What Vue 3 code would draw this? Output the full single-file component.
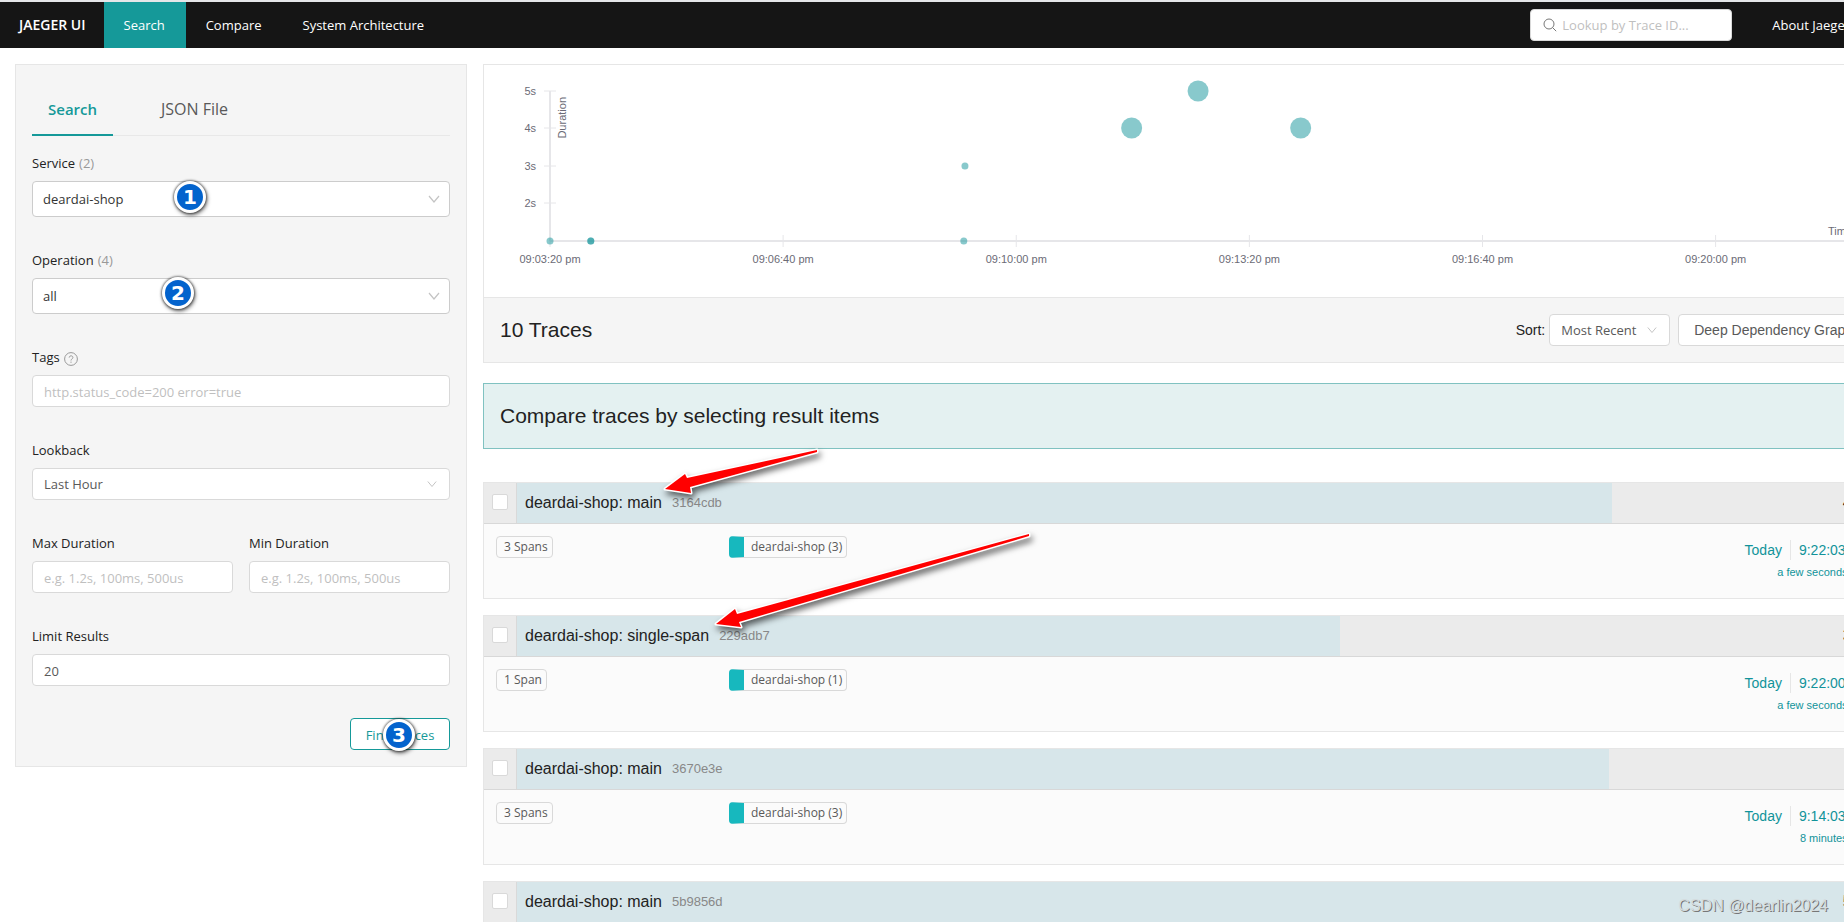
<template>
  <div class="app">
    <div class="page">
      <nav class="nav">
        <a href="#" class="nav__brand">JAEGER UI</a>
        <a
          v-for="item in navItems"
          :key="item"
          href="#"
          class="nav__item"
          :class="{ 'nav__item--active': item === 'Search' }"
        >{{ item }}</a>
        <label class="lookup">
          <svg class="lookup__icon" viewBox="0 0 14 14" aria-hidden="true">
            <circle cx="6" cy="6" r="5" />
            <path d="M9.6 9.6L13.2 13.2" />
          </svg>
          <input v-model="traceId" class="lookup__input" aria-label="Lookup by Trace ID" placeholder="Lookup by Trace ID..." />
        </label>
        <a href="#" class="nav__item nav__item--about">About Jaeger
          <svg class="chevron chevron--nav" viewBox="0 0 12 8" aria-hidden="true"><path d="M1 1l5 6 5-6" /></svg>
        </a>
      </nav>

      <div class="layout">
        <aside class="layout__side">
          <form class="panel search-form" @submit.prevent>
            <div class="tabs">
              <button
                v-for="tab in tabs"
                :key="tab"
                type="button"
                class="tabs__tab"
                :class="{ 'tabs__tab--active': tab === activeTab }"
                @click="activeTab = tab"
              >{{ tab }}</button>
            </div>

            <div class="field">
              <label class="field__label" for="service">Service <span class="field__count">(2)</span></label>
              <div class="select">
                <select id="service" v-model="service" class="control control--tall">
                  <option>deardai-shop</option>
                </select>
                <svg class="chevron" viewBox="0 0 12 8" aria-hidden="true"><path d="M1 1l5 6 5-6" /></svg>
                <span class="badge badge--service">1</span>
              </div>
            </div>

            <div class="field">
              <label class="field__label" for="operation">Operation <span class="field__count">(4)</span></label>
              <div class="select">
                <select id="operation" v-model="operation" class="control control--tall">
                  <option>all</option>
                </select>
                <svg class="chevron" viewBox="0 0 12 8" aria-hidden="true"><path d="M1 1l5 6 5-6" /></svg>
                <span class="badge badge--operation">2</span>
              </div>
            </div>

            <div class="field">
              <label class="field__label" for="tags">Tags
                <svg class="help" viewBox="0 0 14 14" aria-hidden="true">
                  <circle cx="7" cy="7" r="6.4" />
                  <path d="M5.2 5.6C5.2 3.2 8.9 3.3 8.9 5.5C8.9 7 7 6.9 7 8.5M7 9.6V10.8" />
                </svg>
              </label>
              <input id="tags" v-model="tags" class="control" placeholder="http.status_code=200 error=true" />
            </div>

            <div class="field">
              <label class="field__label" for="lookback">Lookback</label>
              <div class="select">
                <select id="lookback" v-model="lookback" class="control">
                  <option>Last Hour</option>
                </select>
                <svg class="chevron chevron--small" viewBox="0 0 12 8" aria-hidden="true"><path d="M1 1l5 6 5-6" /></svg>
              </div>
            </div>

            <div class="field-row">
              <div class="field">
                <label class="field__label" for="max">Max Duration</label>
                <input id="max" v-model="maxDuration" class="control" placeholder="e.g. 1.2s, 100ms, 500us" />
              </div>
              <div class="field">
                <label class="field__label" for="min">Min Duration</label>
                <input id="min" v-model="minDuration" class="control" placeholder="e.g. 1.2s, 100ms, 500us" />
              </div>
            </div>

            <div class="field field--last">
              <label class="field__label" for="limit">Limit Results</label>
              <input id="limit" v-model="limit" class="control" />
            </div>

            <div class="search-form__footer">
              <button type="submit" class="find">Find Traces</button>
              <span class="badge badge--find">3</span>
            </div>
          </form>
        </aside>

        <main class="layout__main">
          <section class="panel results">
            <div class="chart">
              <svg class="chart__plot">
                <line class="chart__axis" x1="0" y1="26" x2="0" y2="176" />
                <line class="chart__axis" x1="0" y1="176" x2="100%" y2="176" />
                <g v-for="tick in yTicks" :key="tick.label">
                  <line class="chart__tick" x1="-6" :y1="tick.y" x2="6" :y2="tick.y" />
                  <text class="chart__label" x="-14" :y="tick.y + 4" text-anchor="end">{{ tick.label }}</text>
                </g>
                <g v-for="tick in xTicks" :key="tick.label">
                  <line class="chart__tick" :x1="toX(tick.t)" y1="170" :x2="toX(tick.t)" y2="182" />
                  <text class="chart__label" :x="toX(tick.t)" y="198" text-anchor="middle">{{ tick.label }}</text>
                </g>
                <text class="chart__label" transform="translate(16 32) rotate(-90)" text-anchor="end">Duration</text>
                <text class="chart__label" x="100%" y="170" text-anchor="end">Time</text>
                <circle
                  v-for="(point, i) in points"
                  :key="i"
                  class="chart__point"
                  :cx="toX(point.t)"
                  :cy="point.y"
                  :r="point.r"
                />
              </svg>
            </div>
            <header class="results__header">
              <h2 class="results__title">10 Traces</h2>
              <label class="results__sort-label" for="sort">Sort:</label>
              <div class="select select--sort">
                <select id="sort" v-model="sort" class="control">
                  <option>Most Recent</option>
                </select>
                <svg class="chevron chevron--small" viewBox="0 0 12 8" aria-hidden="true"><path d="M1 1l5 6 5-6" /></svg>
              </div>
              <button type="button" class="ddg">Deep Dependency Graph</button>
            </header>
          </section>

          <section class="compare">
            <h2 class="compare__title">Compare traces by selecting result items</h2>
          </section>

          <ul class="traces">
            <li v-for="trace in traces" :key="trace.id" class="trace">
              <div class="trace__header">
                <label class="trace__check">
                  <input v-model="trace.selected" type="checkbox" class="checkbox" :aria-label="`Select ${trace.id}`" />
                </label>
                <a href="#" class="trace__title">
                  <span class="trace__bar" :style="{ width: `${trace.percent}%` }"></span>
                  <span class="trace__name">{{ trace.name }}</span>
                  <small class="trace__id">{{ trace.id }}</small>
                  <span class="trace__duration">{{ trace.duration }}</span>
                </a>
              </div>
              <div class="trace__body">
                <div class="trace__spans"><span class="tag">{{ trace.spans }}</span></div>
                <div class="trace__services"><span class="tag tag--service">{{ trace.service }}</span></div>
                <div class="trace__when">
                  <div class="trace__time">
                    <span class="trace__day">Today</span>
                    <span>{{ trace.time }}</span>
                  </div>
                  <small class="trace__ago">{{ trace.ago }}</small>
                </div>
              </div>
            </li>
          </ul>
        </main>
      </div>
    </div>

    <svg class="arrows" width="1100" height="660" aria-hidden="true">
      <path d="M665 489L685 474L687 478L817 450L817 452L690 487L691 493Z" />
      <path d="M716 624L735 609L737 614L1029 534L1029 536L739 622L741 627Z" />
    </svg>
    <span class="watermark">CSDN @dearlin2024</span>
  </div>
</template>

<script setup>
import { ref } from "vue";

const navItems = ["Search", "Compare", "System Architecture"];
const tabs = ["Search", "JSON File"];
const activeTab = ref("Search");

const traceId = ref("");
const service = ref("deardai-shop");
const operation = ref("all");
const tags = ref("");
const lookback = ref("Last Hour");
const maxDuration = ref("");
const minDuration = ref("");
const limit = ref("20");
const sort = ref("Most Recent");

// seconds covered by the x axis
const xDomain = 1117;
const toX = (seconds) => `${(seconds / xDomain) * 100}%`;

const yTicks = [
  { label: "5s", y: 26 },
  { label: "4s", y: 63 },
  { label: "3s", y: 101 },
  { label: "2s", y: 138 },
];

const xTicks = [
  { label: "09:03:20 pm", t: 0 },
  { label: "09:06:40 pm", t: 200 },
  { label: "09:10:00 pm", t: 400 },
  { label: "09:13:20 pm", t: 600 },
  { label: "09:16:40 pm", t: 800 },
  { label: "09:20:00 pm", t: 1000 },
];

const points = [
  { t: 0, y: 176, r: 3.5 },
  { t: 35, y: 176, r: 3.5 },
  { t: 35, y: 176, r: 3.5 },
  { t: 355, y: 176, r: 3.5 },
  { t: 356, y: 101, r: 3.5 },
  { t: 499, y: 63, r: 10.5 },
  { t: 556, y: 26, r: 10.5 },
  { t: 644, y: 63, r: 10.5 },
];

const traces = ref([
  {
    id: "3164cdb",
    name: "deardai-shop: main",
    percent: 80,
    duration: "4.01s",
    spans: "3 Spans",
    service: "deardai-shop (3)",
    time: "9:22:03 pm",
    ago: "a few seconds ago",
    selected: false,
  },
  {
    id: "229adb7",
    name: "deardai-shop: single-span",
    percent: 60.1,
    duration: "3.01s",
    spans: "1 Span",
    service: "deardai-shop (1)",
    time: "9:22:00 pm",
    ago: "a few seconds ago",
    selected: false,
  },
  {
    id: "3670e3e",
    name: "deardai-shop: main",
    percent: 79.8,
    duration: "4s",
    spans: "3 Spans",
    service: "deardai-shop (3)",
    time: "9:14:03 pm",
    ago: "8 minutes ago",
    selected: false,
  },
  {
    id: "5b9856d",
    name: "deardai-shop: main",
    percent: 100,
    duration: "5.01s",
    spans: "3 Spans",
    service: "deardai-shop (3)",
    time: "9:12:36 pm",
    ago: "10 minutes ago",
    selected: false,
  },
]);
</script>

<style>
body {
  margin: 0;
  background: #ffffff;
}
</style>

<style scoped>
* {
  box-sizing: border-box;
}

.app {
  position: relative;
  height: 100vh;
  overflow: hidden;
  font-family: "Open Sans", "Noto Sans", sans-serif;
  font-size: 13px;
  line-height: 20px;
  color: #222222;
}

/* the page is a little wider than the window and runs off its right edge */
.page {
  width: calc(100% + 59px);
  border-top: 2px solid #e4e6e8;
}

a {
  color: inherit;
  text-decoration: none;
}

button,
input,
select {
  font: inherit;
}

.nav {
  display: flex;
  align-items: center;
  height: 46px;
  background: #151515;
  color: #ffffff;
}

.nav__brand {
  padding: 0 18px 0 19px;
  font-size: 14px;
  font-weight: 600;
}

.nav__item {
  display: flex;
  align-items: center;
  gap: 8px;
  height: 100%;
  padding: 0 21px 0 20px;
}

.nav__item--active {
  background: #159999;
}

.nav__item--about {
  padding-right: 33px;
}

.lookup {
  display: flex;
  align-items: center;
  gap: 5px;
  width: 202px;
  height: 32px;
  margin-left: auto;
  margin-right: 20px;
  padding: 0 12px;
  background: #ffffff;
  border: 1px solid #d9d9d9;
  border-radius: 4px;
}

.lookup__icon {
  flex: none;
  width: 14px;
  height: 14px;
  fill: none;
  stroke: #777777;
}

.lookup__input {
  width: 100%;
  min-width: 0;
  padding: 0;
  border: 0;
  outline: 0;
  background: none;
}

::placeholder {
  color: #bfbfbf;
  opacity: 1;
}

.layout {
  display: flex;
  gap: 16px;
  padding: 16px 16px 0 15px;
}

.layout__side {
  flex: 0 0 452px;
}

.layout__main {
  flex: 1;
  min-width: 0;
  font-family: "Liberation Sans", Arial, sans-serif;
}

.panel {
  border: 1px solid #e6e6e6;
}

.search-form {
  padding: 16px;
  background: #f5f5f5;
}

.tabs {
  display: flex;
  gap: 32px;
  margin-bottom: 17px;
  border-bottom: 1px solid #e8e8e8;
}

.tabs__tab {
  height: 55px;
  margin-bottom: -1px;
  padding: 2px 16px 0;
  border: 0;
  border-bottom: 2px solid transparent;
  background: none;
  font-size: 16px;
  color: #595959;
}

.tabs__tab--active {
  border-bottom-color: #159999;
  color: #159999;
  font-size: 15px;
  font-weight: 600;
}

.field {
  display: flex;
  flex-direction: column;
  gap: 8px;
  margin-bottom: 33px;
}

.field--last {
  margin-bottom: 32px;
}

.field-row {
  display: grid;
  grid-template-columns: 1fr 1fr;
  gap: 16px;
}

.field__label {
  display: flex;
  align-items: center;
  gap: 4px;
}

.field__count {
  color: #999999;
}

.help {
  width: 14px;
  height: 14px;
  margin-top: 4px;
  fill: none;
  stroke: #999999;
}

.control {
  width: 100%;
  height: 32px;
  padding: 1px 11px 0;
  border: 1px solid #d9d9d9;
  border-radius: 4px;
  outline: 0;
  background: #ffffff;
  color: #595959;
  appearance: none;
}

.select .control {
  padding-top: 0;
}

.control--tall {
  height: 36px;
  padding: 0 10px;
  border-color: #cccccc;
  color: #333333;
}

.select {
  position: relative;
  display: flex;
}

.chevron {
  position: absolute;
  top: 50%;
  right: 10px;
  width: 12px;
  height: 8px;
  margin-top: -4px;
  fill: none;
  stroke: #c4c4c4;
  stroke-width: 1.2;
  pointer-events: none;
}

.chevron--small {
  right: 13px;
  width: 10px;
}

.chevron--nav {
  position: static;
  margin: 0;
  stroke: #ffffff;
}

.badge {
  position: absolute;
  display: flex;
  align-items: center;
  justify-content: center;
  width: 32px;
  height: 32px;
  border: 3px solid #ffffff;
  border-radius: 50%;
  background: #0363cd;
  box-shadow: 0 0 2px 1px rgba(0, 0, 0, 0.4), 1px 2px 4px rgba(0, 0, 0, 0.6);
  color: #ffffff;
  font-family: "DejaVu Sans", sans-serif;
  font-size: 20px;
  font-weight: 700;
}

.badge--service {
  top: 0;
  left: 142px;
}

.badge--operation {
  top: -1px;
  left: 130px;
}

.badge--find {
  top: 1px;
  right: 35px;
}

.search-form__footer {
  position: relative;
  display: flex;
  justify-content: flex-end;
}

.find {
  width: 100px;
  height: 32px;
  padding: 2px 0 0;
  border: 1px solid #159999;
  border-radius: 4px;
  background: #ffffff;
  color: #159999;
}

.chart {
  display: flex;
  padding: 0 34px 0 66px;
}

.chart__plot {
  width: 100%;
  height: 232px;
  overflow: visible;
}

.chart__axis {
  stroke: #e6e6e9;
  stroke-width: 2;
}

.chart__tick {
  stroke: #e6e6e9;
}

.chart__label {
  fill: #6b6b76;
  font-size: 11px;
}

.chart__point {
  fill: #12939a;
  opacity: 0.5;
}

.results__header {
  display: flex;
  align-items: center;
  height: 65px;
  padding: 0 17px 0 16px;
  border-top: 1px solid #e6e6e6;
  background: #f5f5f5;
}

.results__title,
.compare__title {
  flex: 1;
  margin: 0;
  font-size: 21px;
  font-weight: 400;
  line-height: 28px;
}

.results__sort-label {
  margin-right: 4px;
  font-size: 14px;
}

.select--sort {
  width: 121px;
  margin-right: 8px;
  font-family: "Open Sans", "Noto Sans", sans-serif;
}

.ddg {
  height: 32px;
  padding: 0 15px;
  border: 1px solid #d9d9d9;
  border-radius: 4px;
  background: #ffffff;
  color: #595959;
  font-size: 14px;
}

.compare {
  display: flex;
  align-items: center;
  height: 66px;
  margin: 20px 0 33px;
  padding: 0 16px;
  border: 1px solid #80c2c1;
  background: #e4f1f1;
}

.traces {
  display: flex;
  flex-direction: column;
  gap: 16px;
  margin: 0;
  padding: 0;
  list-style: none;
}

.trace {
  border: 1px solid #e6e6e6;
  background: #fbfbfb;
}

.trace__header {
  display: flex;
  height: 41px;
  border-bottom: 1px solid #d8d8d8;
  background: #ebebeb;
}

.trace__check {
  display: flex;
  align-items: center;
  padding: 0 8px 2px;
  border-right: 1px solid #d9d9d9;
}

.checkbox {
  width: 16px;
  height: 16px;
  margin: 0;
  border: 1px solid #d9d9d9;
  border-radius: 2px;
  background: #ffffff;
  appearance: none;
}

.trace__title {
  position: relative;
  display: flex;
  flex: 1;
  align-items: center;
  gap: 10px;
  padding: 0 4px 0 8px;
  font-size: 16px;
}

.trace__bar {
  position: absolute;
  top: 0;
  bottom: 0;
  left: 0;
  background: #d7e6ea;
}

.trace__name,
.trace__id,
.trace__duration {
  position: relative;
}

.trace__id {
  font-size: 13px;
  color: #888888;
}

.trace__duration {
  margin-left: auto;
}

.trace__body {
  display: flex;
  height: 74px;
  padding: 12px 17px 12px 12px;
}

.trace__spans {
  width: 233px;
}

.trace__services {
  flex: 1;
}

.tag {
  display: inline-block;
  height: 22px;
  padding: 0 4px 0 7px;
  border: 1px solid #d9d9d9;
  border-radius: 4px;
  font-family: "Open Sans", "Noto Sans", sans-serif;
  font-size: 12px;
  color: #595959;
}

.tag--service {
  border-left: 15px solid #17b8be;
}

.trace__when {
  padding-top: 4px;
  text-align: right;
  color: #11939a;
}

.trace__time {
  display: flex;
  justify-content: flex-end;
  margin-bottom: 2px;
  font-size: 14px;
}

.trace__day {
  margin-right: 8px;
  padding-right: 8px;
  border-right: 1px solid #e6e6e6;
}

.trace__ago {
  font-size: 11px;
}

.arrows {
  position: absolute;
  top: 0;
  left: 0;
  fill: #ff0000;
  stroke: #ffffff;
  stroke-width: 3;
  stroke-linejoin: round;
  paint-order: stroke;
  filter: drop-shadow(2px 4px 3px rgba(0, 0, 0, 0.6));
  pointer-events: none;
}

.watermark {
  position: absolute;
  right: 16px;
  bottom: 6px;
  font-family: "Liberation Sans", Arial, sans-serif;
  font-size: 16px;
  color: #d4dcde;
  text-shadow: 1px 1px 0 #777777;
}
</style>
